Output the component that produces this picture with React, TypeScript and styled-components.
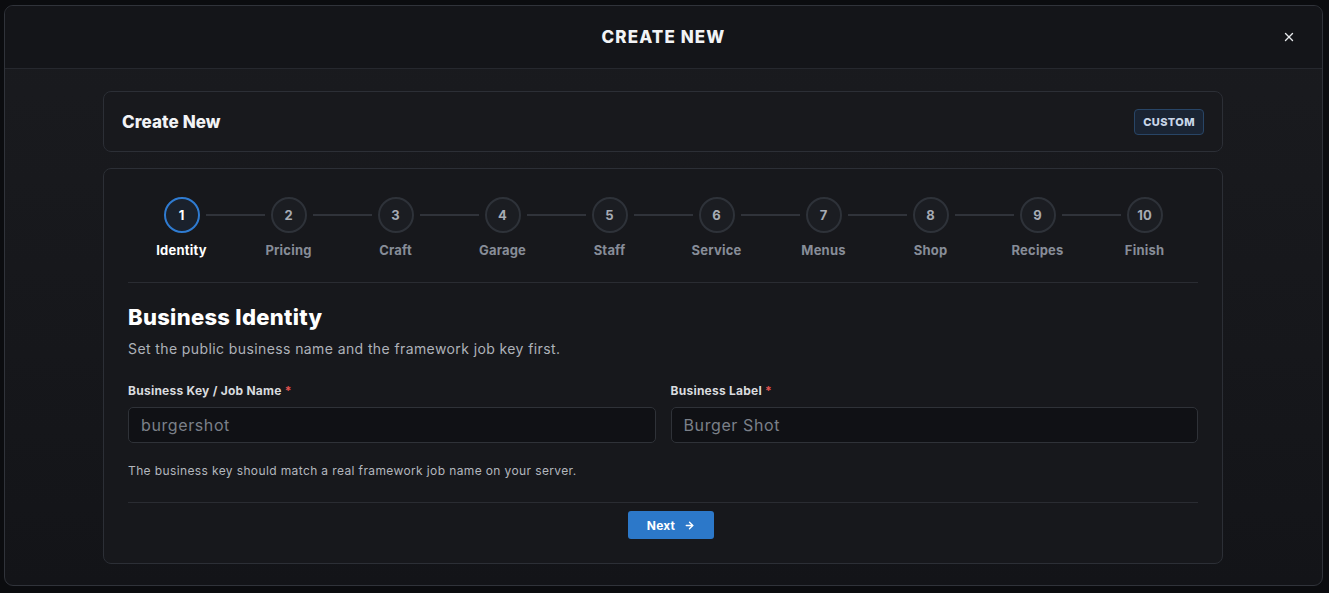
import React from "react";
import styled, { createGlobalStyle } from "styled-components";
import { ArrowRight, X } from "lucide-react";

const GlobalStyle = createGlobalStyle`
  html, body {
    margin: 0;
    padding: 0;
    background: #0b0c0f;
    font-family: "Inter", "Noto Sans", sans-serif;
    color: #e8eaed;
  }
  * { box-sizing: border-box; }
`;

const Backdrop = styled.div`
  padding: 5px 6px 7px 4px;
  height: 593px;
`;

const Modal = styled.div`
  height: 100%;
  display: flex;
  flex-direction: column;
  border: 1px solid #30333a;
  border-radius: 9px;
  overflow: hidden;
  background: linear-gradient(180deg, #1a1b1f 0%, #16171b 60%, #131418 100%);
`;

const Header = styled.header`
  height: 63px;
  flex-shrink: 0;
  display: grid;
  grid-template-columns: 1fr auto 1fr;
  align-items: center;
  background: #141519;
  border-bottom: 1px solid #26282e;
`;

const HeaderTitle = styled.h1`
  grid-column: 2;
  margin: 0;
  font-size: 17px;
  font-weight: 800;
  letter-spacing: 1.1px;
  color: #f2f3f5;
`;

const CloseButton = styled.button`
  justify-self: end;
  margin-right: 26px;
  border: none;
  background: none;
  padding: 0;
  display: flex;
  color: #e6e8eb;
  cursor: pointer;
`;

const Body = styled.div`
  flex: 1;
  padding: 22px 1px 0 0;
  display: flex;
  flex-direction: column;
  align-items: center;
  gap: 16px;
`;

const Card = styled.section`
  width: 1120px;
  border: 1px solid #2c2f36;
  border-radius: 8px;
  background: #18191d;
`;

const TopCard = styled(Card)`
  height: 61px;
  display: flex;
  align-items: center;
  justify-content: space-between;
  padding: 0 18px;
`;

const TopTitle = styled.h2`
  margin: 0;
  font-size: 17px;
  font-weight: 800;
  color: #f2f3f5;
  letter-spacing: 0.1px;
`;

const Badge = styled.span`
  height: 26px;
  padding: 0 8px;
  display: inline-flex;
  align-items: center;
  border: 1px solid #284566;
  border-radius: 4px;
  background: #1a2433;
  color: #c9d6e8;
  font-size: 11px;
  font-weight: 800;
  letter-spacing: 0.4px;
`;

const WizardCard = styled(Card)`
  padding: 28px 24px 24px;
  background: #17181c;
`;

const Stepper = styled.ol`
  list-style: none;
  margin: 0;
  padding: 0 0 23px;
  display: grid;
  grid-template-columns: repeat(10, 1fr);
  border-bottom: 1px solid #2a2c32;
`;

const Step = styled.li`
  display: flex;
  flex-direction: column;
  align-items: center;
`;

const StepTrack = styled.div`
  width: 100%;
  display: flex;
  align-items: center;
`;

const Connector = styled.span<{ $hidden?: boolean; $side: "left" | "right" }>`
  flex: 1;
  height: 2px;
  background: ${(p) => (p.$hidden ? "transparent" : "#30333a")};
  margin: ${(p) => (p.$side === "left" ? "0 6px 0 0" : "0 0 0 6px")};
`;

const Circle = styled.span<{ $active?: boolean }>`
  width: 36px;
  height: 36px;
  flex-shrink: 0;
  border-radius: 50%;
  display: flex;
  align-items: center;
  justify-content: center;
  border: 2px solid ${(p) => (p.$active ? "#2f7bd1" : "#2e3239")};
  background: ${(p) => (p.$active ? "#1a212c" : "#1b1d22")};
  color: ${(p) => (p.$active ? "#ffffff" : "#a6abb4")};
  font-size: 13px;
  font-weight: 700;
`;

const StepLabel = styled.span<{ $active?: boolean }>`
  margin-top: 8px;
  font-size: 13px;
  line-height: 18px;
  font-weight: 700;
  letter-spacing: 0.2px;
  color: ${(p) => (p.$active ? "#ffffff" : "#878d98")};
`;

const SectionTitle = styled.h3`
  margin: 19px 0 0;
  font-size: 22px;
  line-height: 30px;
  font-weight: 800;
  color: #ffffff;
  letter-spacing: 0.3px;
`;

const SectionText = styled.p`
  margin: 7px 0 0;
  font-size: 14px;
  line-height: 20px;
  color: #aeb2b9;
  letter-spacing: 0.4px;
`;

const FieldGrid = styled.div`
  margin-top: 24px;
  display: grid;
  grid-template-columns: 1fr 1fr;
  gap: 15px;
`;

const Field = styled.label`
  display: flex;
  flex-direction: column;
  gap: 8px;
`;

const FieldLabel = styled.span`
  font-size: 12px;
  line-height: 16px;
  font-weight: 700;
  color: #d9dbdf;
  letter-spacing: 0.25px;
`;

const Required = styled.span`
  color: #e0524f;
  margin-left: 3px;
`;

const Input = styled.input`
  height: 36px;
  padding: 0 12px;
  border: 1px solid #2f3238;
  border-radius: 5px;
  background: #101115;
  color: #e8eaed;
  font-family: inherit;
  font-size: 16px;
  letter-spacing: 0.6px;
  outline: none;
  &::placeholder {
    color: #7b8089;
  }
`;

const HelpText = styled.p`
  margin: 20px 0 0;
  padding-bottom: 23px;
  font-size: 12px;
  line-height: 16px;
  color: #b3b7be;
  letter-spacing: 0.38px;
  border-bottom: 1px solid #2a2c32;
`;

const Actions = styled.div`
  display: flex;
  justify-content: center;
  padding: 8px 0 0 16px;
`;

const NextButton = styled.button`
  height: 28px;
  width: 86px;
  display: inline-flex;
  align-items: center;
  justify-content: center;
  gap: 9px;
  border: none;
  border-radius: 3px;
  background: #2c78c9;
  color: #ffffff;
  font-family: inherit;
  font-size: 12px;
  font-weight: 700;
  letter-spacing: 0.2px;
  cursor: pointer;
`;

const steps = [
  "Identity",
  "Pricing",
  "Craft",
  "Garage",
  "Staff",
  "Service",
  "Menus",
  "Shop",
  "Recipes",
  "Finish",
];

export default function App() {
  const current = 0;

  return (
    <>
      <GlobalStyle />
      <Backdrop>
        <Modal>
          <Header>
            <HeaderTitle>CREATE NEW</HeaderTitle>
            <CloseButton aria-label="Close">
              <X size={14} strokeWidth={2.4} />
            </CloseButton>
          </Header>
          <Body>
            <TopCard>
              <TopTitle>Create New</TopTitle>
              <Badge>CUSTOM</Badge>
            </TopCard>
            <WizardCard>
              <Stepper>
                {steps.map((label, i) => (
                  <Step key={label}>
                    <StepTrack>
                      <Connector $side="left" $hidden={i === 0} />
                      <Circle $active={i === current}>{i + 1}</Circle>
                      <Connector $side="right" $hidden={i === steps.length - 1} />
                    </StepTrack>
                    <StepLabel $active={i === current}>{label}</StepLabel>
                  </Step>
                ))}
              </Stepper>

              <SectionTitle>Business Identity</SectionTitle>
              <SectionText>
                Set the public business name and the framework job key first.
              </SectionText>

              <FieldGrid>
                <Field>
                  <FieldLabel>
                    Business Key / Job Name<Required>*</Required>
                  </FieldLabel>
                  <Input placeholder="burgershot" />
                </Field>
                <Field>
                  <FieldLabel>
                    Business Label<Required>*</Required>
                  </FieldLabel>
                  <Input placeholder="Burger Shot" />
                </Field>
              </FieldGrid>

              <HelpText>
                The business key should match a real framework job name on your server.
              </HelpText>

              <Actions>
                <NextButton>
                  Next
                  <ArrowRight size={11} strokeWidth={3} />
                </NextButton>
              </Actions>
            </WizardCard>
          </Body>
        </Modal>
      </Backdrop>
    </>
  );
}
